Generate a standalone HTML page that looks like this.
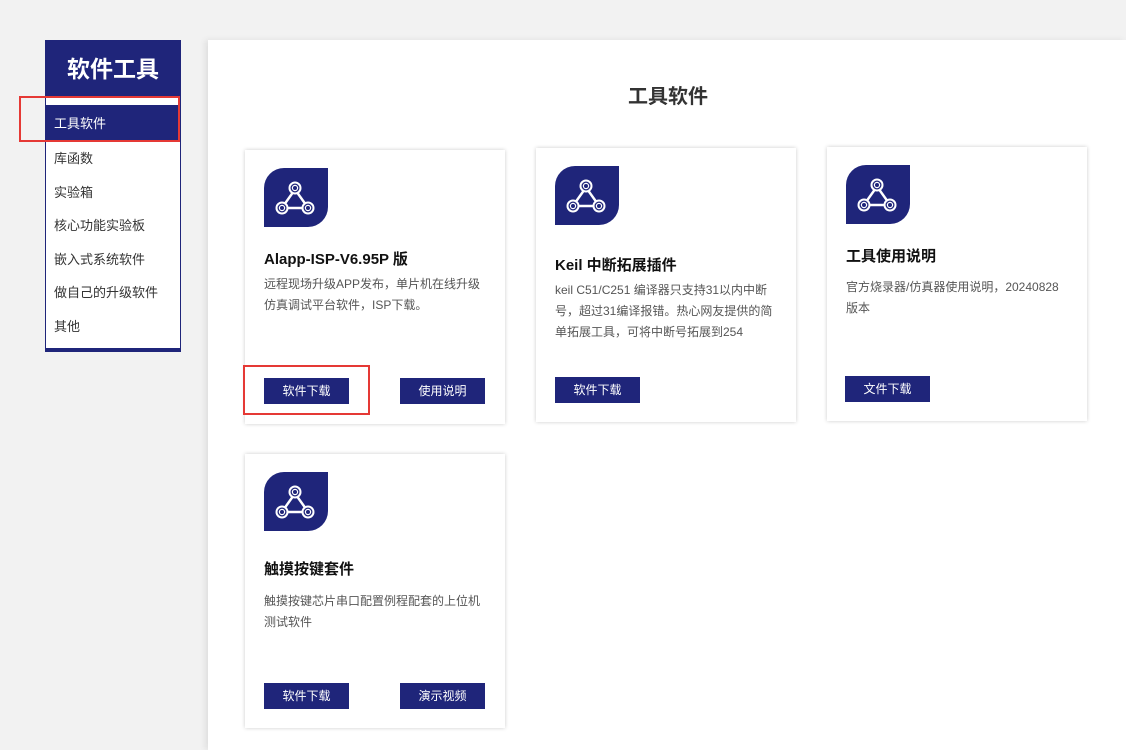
<!DOCTYPE html>
<html><head><meta charset="utf-8"><style>
*{margin:0;padding:0;box-sizing:border-box}
body{width:1126px;height:750px;background:#f2f2f2;font-family:"Liberation Sans","Noto Sans CJK SC",sans-serif;position:relative;overflow:hidden;color:#333}
.side{position:absolute;left:45px;top:40px;width:136px;height:312px;background:#fff;border:1px solid #1f257a;border-bottom:4px solid #1f257a}
.side .hd{height:58px;background:#1f257a;color:#fff;font-size:23px;font-weight:bold;text-align:center;line-height:58px;margin:-1px -1px 0}
.side .act{margin-top:7px;height:37px;background:#1f257a;color:#fff;font-size:13px;line-height:37px;padding-left:9px;margin-left:-1px;margin-right:-1px}
.side .it{height:33.5px;line-height:33.5px;font-size:13px;padding-left:8px;color:#333}
.main{position:absolute;left:208px;top:40px;width:918px;height:710px;background:#fff;box-shadow:-3px 0 6px rgba(0,0,0,.08)}
h1{position:absolute;left:208px;width:920px;top:80px;text-align:center;font-size:20px;font-weight:bold;color:#333}
.card{position:absolute;width:260px;height:274px;background:#fff;box-shadow:0 0 4px rgba(0,0,0,.2)}
.ic{position:absolute;left:19px;top:18px;width:64px;height:59px;background:#1f257a;border-radius:20px 0 20px 0}
.card h3{position:absolute;left:19px;font-size:15px;font-weight:bold;color:#111}
.card p{position:absolute;left:19px;width:226px;font-size:12px;line-height:21px;color:#555}
.btn{position:absolute;width:85px;height:26px;background:#1f257a;color:#fff;font-size:12px;text-align:center;line-height:26px;top:228px}
.red{position:absolute;border:2px solid #e53935}
</style></head><body>
<div class="side"><div class="hd">软件工具</div><div class="act">工具软件</div>
<div class="it">库函数</div><div class="it">实验箱</div><div class="it">核心功能实验板</div><div class="it">嵌入式系统软件</div><div class="it">做自己的升级软件</div><div class="it">其他</div></div>
<div class="main"></div>
<h1>工具软件</h1>
<svg width="0" height="0" style="position:absolute"><defs><g id="g" fill="none" stroke="#fff"><path d="M28.5 25 L21 35.5 M33.5 25 L41 35.5 M24 40 H38" stroke-width="2.4"/><circle cx="31" cy="20" r="5.5" stroke-width="2"/><circle cx="31" cy="20" r="2.6" stroke-width="1.2"/><circle cx="18" cy="40" r="5.5" stroke-width="2"/><circle cx="18" cy="40" r="2.6" stroke-width="1.2"/><circle cx="44" cy="40" r="5.5" stroke-width="2"/><circle cx="44" cy="40" r="2.6" stroke-width="1.2"/></g></defs></svg>
<div class="card" style="left:245px;top:150px"><div class="ic"><svg width="64" height="59"><use href="#g"/></svg></div><h3 style="top:98px">Alapp-ISP-V6.95P 版</h3><p style="top:124px">远程现场升级APP发布，单片机在线升级仿真调试平台软件，ISP下载。</p><div class="btn" style="left:19px">软件下载</div><div class="btn" style="left:155px">使用说明</div></div>
<div class="card" style="left:536px;top:148px;height:274px"><div class="ic"><svg width="64" height="59"><use href="#g"/></svg></div><h3 style="top:106px">Keil 中断拓展插件</h3><p style="top:132px">keil C51/C251 编译器只支持31以内中断号，超过31编译报错。热心网友提供的简单拓展工具，可将中断号拓展到254</p><div class="btn" style="left:19px;top:229px">软件下载</div></div>
<div class="card" style="left:827px;top:147px"><div class="ic"><svg width="64" height="59"><use href="#g"/></svg></div><h3 style="top:98px">工具使用说明</h3><p style="top:130px">官方烧录器/仿真器使用说明，20240828<br>版本</p><div class="btn" style="left:18px;top:229px">文件下载</div></div>
<div class="card" style="left:245px;top:454px"><div class="ic"><svg width="64" height="59"><use href="#g"/></svg></div><h3 style="top:104px">触摸按键套件</h3><p style="top:137px">触摸按键芯片串口配置例程配套的上位机测试软件</p><div class="btn" style="left:19px;top:229px">软件下载</div><div class="btn" style="left:155px;top:229px">演示视频</div></div>
<div class="red" style="left:19px;top:96px;width:161px;height:46px"></div>
<div class="red" style="left:243px;top:365px;width:127px;height:50px"></div>
</body></html>
